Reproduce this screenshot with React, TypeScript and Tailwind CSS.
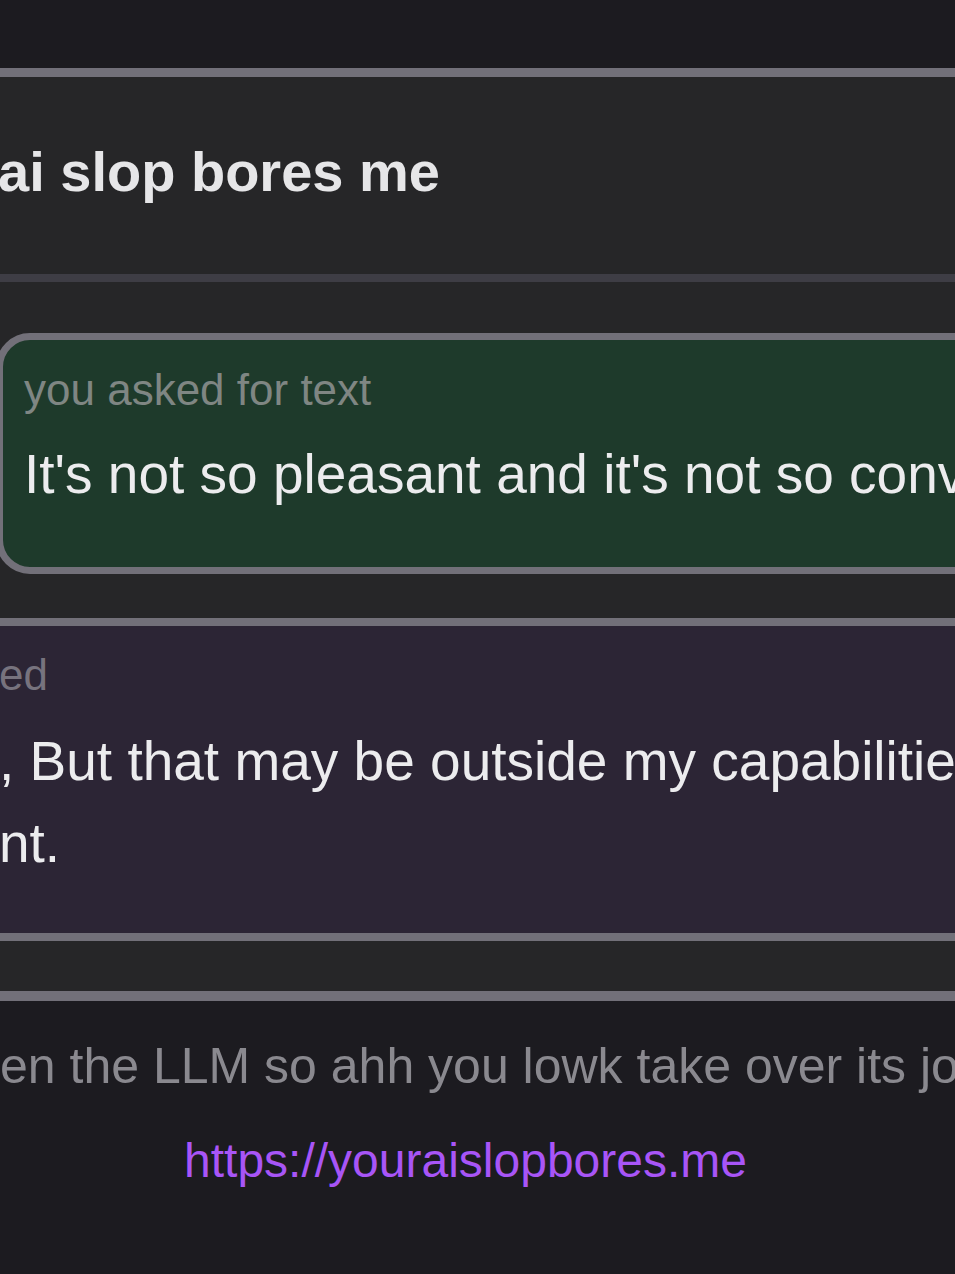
import React from "react";

const font = "'Comic Sans MS', 'Liberation Sans', Arial, sans-serif";

export default function App() {
  return (
    <div
      className="w-[955px] h-[1274px] overflow-hidden bg-[#1c1b20]"
      style={{ fontFamily: font }}
    >
      <div className="h-[68px]" />

      {/* header */}
      <header className="h-[214px] border-t-[9px] border-b-[8px] border-t-[#727079] border-b-[#3e3d45] bg-[#262628] pt-[67px]">
        <h1 className="-ml-[2px] whitespace-nowrap text-[56px] font-bold leading-none text-[#e6e6e8]">
          ai slop bores me
        </h1>
      </header>

      {/* chat */}
      <main className="flex h-[709px] flex-col bg-[#262628] pt-[51px]">
        <div className="-ml-[4px] h-[241px] w-[1000px] rounded-l-[34px] border-[7px] border-[#727079] bg-[#1e3a2b] pl-[21px] pt-[28px]">
          <p className="whitespace-nowrap text-[44px] leading-none text-[#7f8683]">
            you asked for text
          </p>
          <p className="mt-[35px] whitespace-nowrap text-[55px] leading-none text-[#ececee]">
            It's not so pleasant and it's not so convenient
          </p>
        </div>

        <div className="mt-[44px] -ml-[10px] h-[323px] w-[1000px] border-y-[8px] border-[#727079] bg-[#2c2535] pl-[9px] pt-[27px]">
          <p className="whitespace-nowrap text-[44px] leading-none text-[#77737e]">
            ed
          </p>
          <p className="mt-[23px] whitespace-nowrap text-[55px] leading-[82px] text-[#ececee]">
            , But that may be outside my capabilities
            <br />
            nt.
          </p>
        </div>
      </main>

      {/* footer */}
      <footer className="border-t-[10px] border-[#727079] bg-[#1c1b20] pt-[40px]">
        <p className="whitespace-nowrap text-[50px] leading-none text-[#8a898f]">
          en the LLM so ahh you lowk take over its job
        </p>
        <div className="mt-[46px] w-[931px] text-center">
          <a
            href="https://youraislopbores.me"
            className="text-[48px] leading-none text-[#a855f7]"
          >
            https://youraislopbores.me
          </a>
        </div>
      </footer>
    </div>
  );
}
